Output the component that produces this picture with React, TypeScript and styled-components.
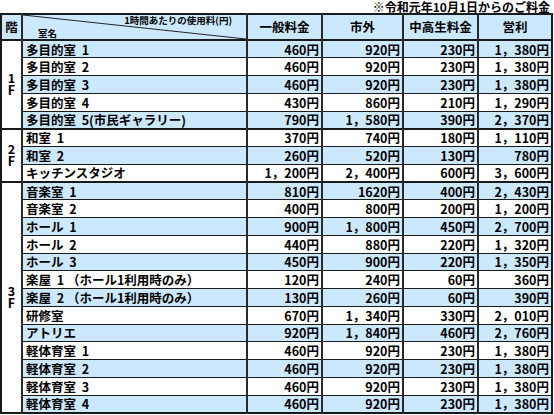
import styled, { createGlobalStyle } from 'styled-components';

const GlobalStyle = createGlobalStyle`
  html, body { margin: 0; padding: 0; background: #fff; }
  body { font-family: "Noto Sans CJK JP", "Liberation Sans", sans-serif; color: #000; }
`;

const Page = styled.div`
  width: 554px;
  height: 415px;
  overflow: hidden;
`;

const Note = styled.div`
  height: 13px;
  padding: 1px 4px 0 0;
  box-sizing: border-box;
  text-align: right;
  font-size: 12px;
  line-height: 12px;
  font-weight: 700;
`;

const Table = styled.table`
  border-collapse: collapse;
  table-layout: fixed;
  width: 551px;
  font-size: 12.5px;
  font-weight: 700;
  border: 2px solid #1a1a1a;
`;

const HeadRow = styled.tr`
  height: 24px;
  background: #cce8fc;
  border-bottom: 2px solid #1a1a1a;
`;

const Row = styled.tr<{ $blue: boolean; $groupStart?: boolean }>`
  height: 17.75px;
  background: ${(p) => (p.$blue ? '#cce8fc' : '#ffffff')};
  border-top: ${(p) => (p.$groupStart ? '2px solid #1a1a1a' : '1px solid #1a1a1a')};
`;

const Th = styled.th`
  padding: 0;
  font-weight: 700;
  font-size: 12.5px;
  text-align: center;
  border-left: 2px solid #2a2a2a;
  line-height: 14px;
`;

const CornerCell = styled.th`
  position: relative;
  padding: 0;
  border-left: 2px solid #2a2a2a;
  font-weight: 700;
`;

const CornerInner = styled.div`
  display: flex;
  flex-direction: column;
  justify-content: space-between;
  height: 24px;
  font-size: 9.5px;
  line-height: 11px;
`;

const CornerTop = styled.span`
  align-self: flex-end;
  padding-right: 14px;
  position: relative;
  z-index: 1;
`;

const CornerBottom = styled.span`
  align-self: flex-start;
  padding-left: 15px;
  position: relative;
  z-index: 1;
`;

const Diagonal = styled.svg`
  position: absolute;
  left: 0;
  top: 0;
  width: 100%;
  height: 100%;
`;

const FloorCell = styled.td`
  padding: 0;
  background: #fff;
  text-align: center;
  vertical-align: middle;
  font-size: 12.5px;
  border-top: 2px solid #1a1a1a;
`;

const FloorChar = styled.div`
  height: 12px;
  line-height: 12px;
`;

const NameCell = styled.td`
  padding: 0 0 0 3px;
  white-space: pre;
  border-left: 2px solid #2a2a2a;
  line-height: 13px;
  overflow: hidden;
`;

const NumCell = styled.td`
  padding: 0 2px 0 0;
  text-align: right;
  border-left: 2px solid #2a2a2a;
  line-height: 13px;
`;

type Room = [string, string, string, string, string];

const floors: { label: string; rooms: Room[] }[] = [
  {
    label: '1',
    rooms: [
      ['多目的室  1', '460円', '920円', '230円', '1，380円'],
      ['多目的室  2', '460円', '920円', '230円', '1，380円'],
      ['多目的室  3', '460円', '920円', '230円', '1，380円'],
      ['多目的室  4', '430円', '860円', '210円', '1，290円'],
      ['多目的室  5(市民ギャラリー)', '790円', '1，580円', '390円', '2，370円'],
    ],
  },
  {
    label: '2',
    rooms: [
      ['和室  1', '370円', '740円', '180円', '1，110円'],
      ['和室  2', '260円', '520円', '130円', '780円'],
      ['キッチンスタジオ', '1，200円', '2，400円', '600円', '3，600円'],
    ],
  },
  {
    label: '3',
    rooms: [
      ['音楽室  1', '810円', '1620円', '400円', '2，430円'],
      ['音楽室  2', '400円', '800円', '200円', '1，200円'],
      ['ホール  1', '900円', '1，800円', '450円', '2，700円'],
      ['ホール  2', '440円', '880円', '220円', '1，320円'],
      ['ホール  3', '450円', '900円', '220円', '1，350円'],
      ['楽屋  1 （ホール1利用時のみ）', '120円', '240円', '60円', '360円'],
      ['楽屋  2 （ホール1利用時のみ）', '130円', '260円', '60円', '390円'],
      ['研修室', '670円', '1，340円', '330円', '2，010円'],
      ['アトリエ', '920円', '1，840円', '460円', '2，760円'],
      ['軽体育室  1', '460円', '920円', '230円', '1，380円'],
      ['軽体育室  2', '460円', '920円', '230円', '1，380円'],
      ['軽体育室  3', '460円', '920円', '230円', '1，380円'],
      ['軽体育室  4', '460円', '920円', '230円', '1，380円'],
    ],
  },
];

const App = () => {
  let idx = 0;
  return (
    <Page>
      <GlobalStyle />
      <Note>※令和元年10月1日からのご料金</Note>
      <Table>
        <colgroup>
          <col style={{ width: 21 }} />
          <col style={{ width: 225 }} />
          <col style={{ width: 75 }} />
          <col style={{ width: 81 }} />
          <col style={{ width: 75 }} />
          <col style={{ width: 74 }} />
        </colgroup>
        <thead>
          <HeadRow>
            <Th style={{ borderLeft: 'none' }}>階</Th>
            <CornerCell>
              <Diagonal viewBox="0 0 225 24" preserveAspectRatio="none">
                <line x1="0" y1="0" x2="225" y2="24" stroke="#222" strokeWidth="1" />
              </Diagonal>
              <CornerInner>
                <CornerTop>1時間あたりの使用料(円)</CornerTop>
                <CornerBottom>室名</CornerBottom>
              </CornerInner>
            </CornerCell>
            <Th>一般料金</Th>
            <Th>市外</Th>
            <Th>中高生料金</Th>
            <Th>営利</Th>
          </HeadRow>
        </thead>
        <tbody>
          {floors.map((floor) =>
            floor.rooms.map((room, i) => {
              // blue / white striping, first body row blue
              const blue = idx % 2 === 0;
              idx++;
              return (
                <Row key={room[0] + floor.label} $blue={blue} $groupStart={i === 0}>
                  {i === 0 && (
                    <FloorCell rowSpan={floor.rooms.length}>
                      <FloorChar>{floor.label}</FloorChar>
                      <FloorChar>F</FloorChar>
                    </FloorCell>
                  )}
                  <NameCell>{room[0]}</NameCell>
                  <NumCell>{room[1]}</NumCell>
                  <NumCell>{room[2]}</NumCell>
                  <NumCell>{room[3]}</NumCell>
                  <NumCell>{room[4]}</NumCell>
                </Row>
              );
            })
          )}
        </tbody>
      </Table>
    </Page>
  );
};

export default App;
